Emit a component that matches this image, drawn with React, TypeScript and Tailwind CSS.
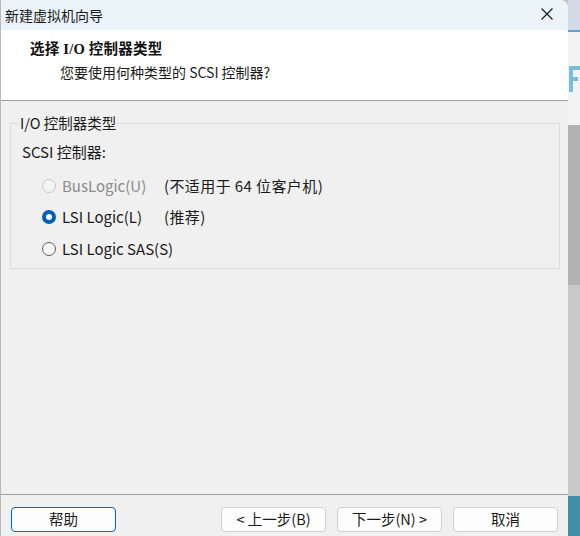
import React from "react";

const font = { fontFamily: '"Noto Sans CJK SC", "Noto Sans", sans-serif' };

function Radio({ state }: { state: "disabled" | "checked" | "unchecked" }) {
  if (state === "checked") {
    return (
      <span className="w-[14px] h-[14px] rounded-full bg-[#005fb8] flex items-center justify-center shrink-0">
        <span className="w-[6px] h-[6px] rounded-full bg-white" />
      </span>
    );
  }
  return (
    <span
      className={
        "w-[14px] h-[14px] rounded-full border shrink-0 " +
        (state === "disabled" ? "border-[#c8c8c8] bg-[#f4f4f4]" : "border-[#5c5c5c] bg-[#f8f8f8]")
      }
    />
  );
}

function Btn({ children, primary }: { children: React.ReactNode; primary?: boolean }) {
  return (
    <div
      className={
        "w-[105px] h-[25px] rounded-[4px] bg-[#fdfdfd] flex items-center justify-center text-[14.5px] text-[#1a1a1a] border " +
        (primary ? "border-[#0067c0]" : "border-[#d0d0d0]")
      }
    >
      {children}
    </div>
  );
}

export default function App() {
  return (
    <div className="w-[580px] h-[536px] flex overflow-hidden bg-[#c4c4c4]" style={font}>
      <div className="w-[568px] h-[536px] flex flex-col bg-[#f0f0f0] rounded-tr-[8px] overflow-hidden border-l border-[#b8b8b8]">
        {/* title bar */}
        <div className="h-[30px] bg-[#eaf3f7] flex items-center justify-between pl-[4px] pr-[14px] shrink-0">
          <span className="text-[14px] leading-[18px] text-[#1a1a1a]">新建虚拟机向导</span>
          <svg width="14" height="14" viewBox="0 0 14 14" className="mb-[2px]">
            <path d="M1.5 1.5 L12.5 12.5 M12.5 1.5 L1.5 12.5" stroke="#1a1a1a" strokeWidth="1.2" />
          </svg>
        </div>
        {/* header */}
        <div className="h-[71px] bg-white border-b border-[#a0a0a0] shrink-0 flex flex-col pl-[29px] pt-[9px]">
          <div className="text-[14.5px] leading-[18px] font-bold text-[#111] tracking-[0.3px]">
            选择 <span style={{ fontFamily: '"Liberation Serif", serif' }}>I/O</span> 控制器类型
          </div>
          <div className="text-[14px] leading-[18px] text-[#1a1a1a] pl-[30px] mt-[5px]">您要使用何种类型的 SCSI 控制器?</div>
        </div>
        {/* body */}
        <div className="flex-1 flex flex-col px-[9px] pt-[14px]">
          <div className="relative border border-[#dcdcdc] h-[146px] w-[550px] mt-[8px]">
            <div className="absolute left-[8px] top-[-11px] bg-[#f0f0f0] px-[1px] text-[14.5px] leading-[20px] text-[#1a1a1a]">
              I/O 控制器类型
            </div>
            <div className="pl-[11px] pt-[18px] text-[15px] leading-[20px] text-[#1a1a1a]">SCSI 控制器:</div>
            <div className="flex flex-col pl-[31px] mt-[14px] gap-[11px] text-[15px] leading-[20px]">
              <div className="flex items-center h-[20px]">
                <Radio state="disabled" />
                <span className="ml-[6px] w-[102px] text-[#8a8a8a]">BusLogic(U)</span>
                <span className="text-[#1a1a1a] tracking-[0.4px]">(不适用于 64 位客户机)</span>
              </div>
              <div className="flex items-center h-[20px]">
                <Radio state="checked" />
                <span className="ml-[6px] w-[102px] text-[#1a1a1a]">LSI Logic(L)</span>
                <span className="text-[#1a1a1a] tracking-[0.4px]">(推荐)</span>
              </div>
              <div className="flex items-center h-[22px]">
                <Radio state="unchecked" />
                <span className="ml-[6px] text-[#1a1a1a]">LSI Logic SAS(S)</span>
              </div>
            </div>
          </div>
          <div className="flex-1" />
          <div className="border-t border-[#a0a0a0] mx-[-9px]" />
          <div className="flex items-center h-[41px] pt-[7px]">
            <div className="ml-[1px]">
              <Btn primary>帮助</Btn>
            </div>
            <div className="flex-1" />
            <div className="flex gap-[11px] mr-[1px]">
              <Btn>&lt; 上一步(B)</Btn>
              <Btn>下一步(N) &gt;</Btn>
              <Btn>取消</Btn>
            </div>
          </div>
        </div>
      </div>
      {/* desktop strip */}
      <div className="w-[12px] h-[536px] flex flex-col shrink-0 overflow-hidden">
        <div className="h-[30px] bg-[#d3d9e6]" />
        <div className="h-[2px] bg-[#5f9fd0]" />
        <div className="h-[93px] bg-[#f3f3f3] flex items-center">
          <svg width="12" height="26" viewBox="0 0 12 26">
            <rect x="1" y="0" width="4" height="26" fill="#74bfe0" />
            <rect x="1" y="0" width="11" height="4" fill="#74bfe0" />
            <rect x="1" y="11" width="9" height="4" fill="#74bfe0" />
          </svg>
        </div>
        <div className="h-[160px] bg-[#b3b3b3]" />
        <div className="flex-1 bg-[#c9c9c9]" />
        <div className="h-[40px] bg-[#3f8fa8]" />
      </div>
    </div>
  );
}
